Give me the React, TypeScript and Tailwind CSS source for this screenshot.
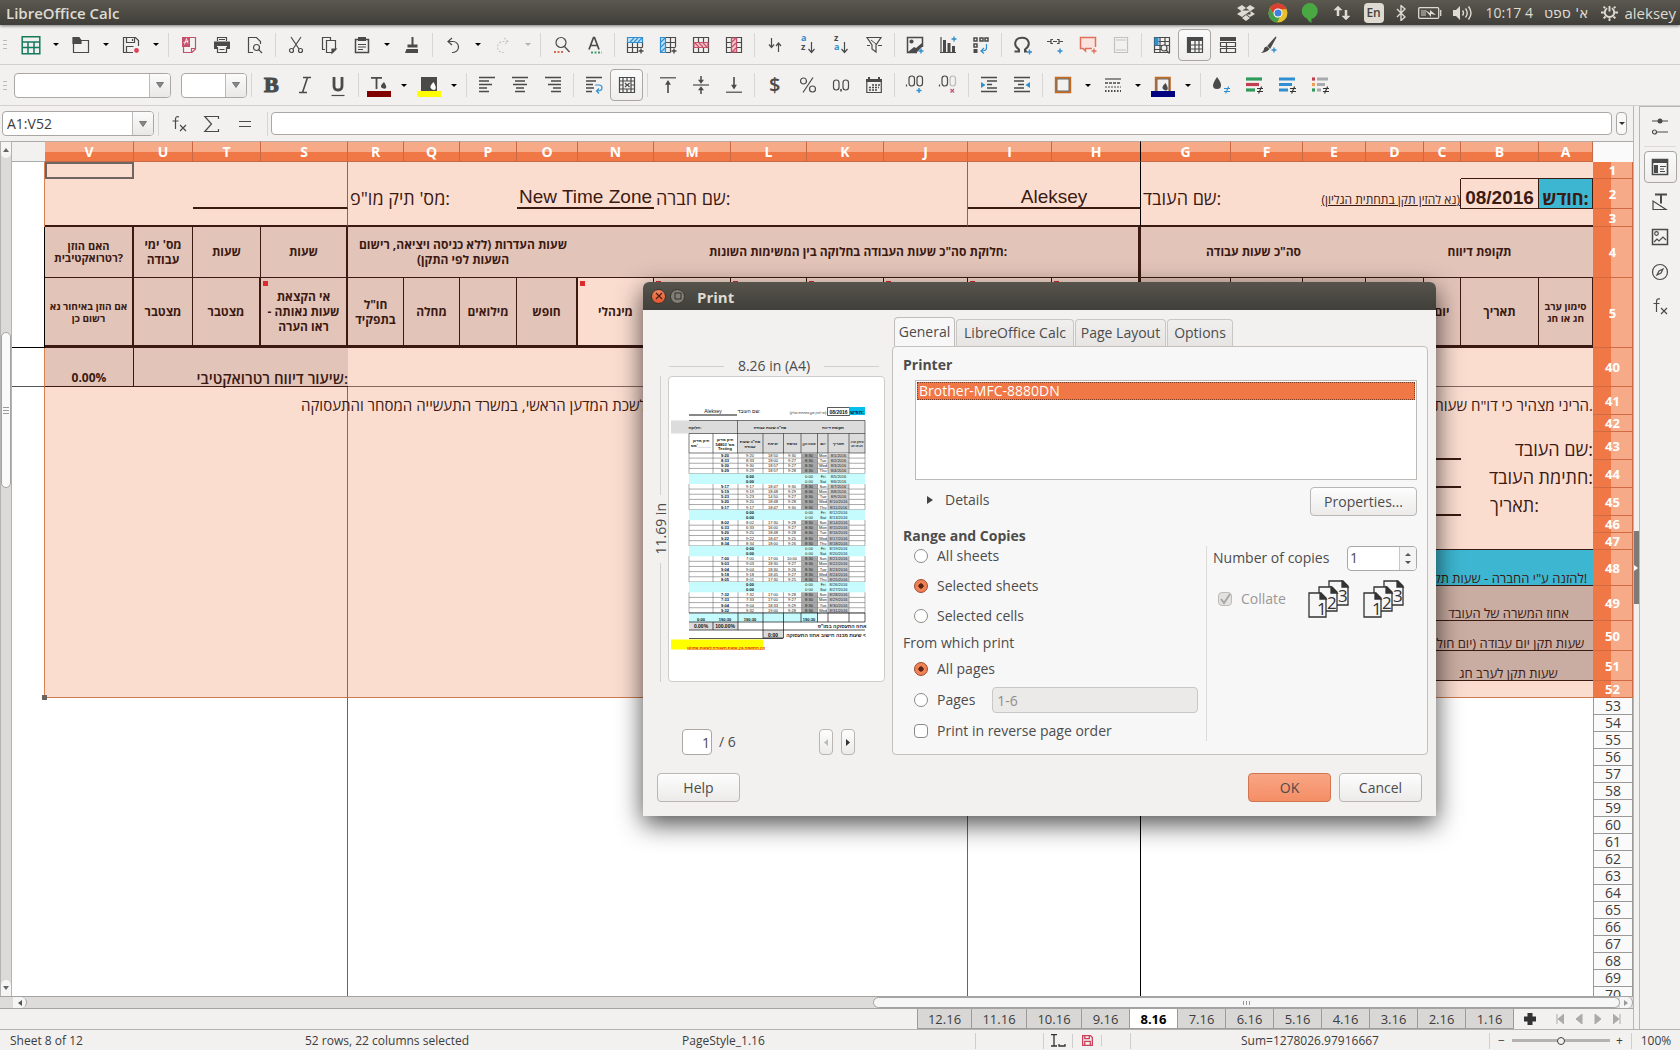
import type { ReactNode } from 'react'

const dark = '#4a4a4a'
const blue = '#2f8fd0'
const red = '#c4506a'

/* ---------- toolbar pieces ---------- */

const Glyph = ({ children }: { children: ReactNode }) => (
  <svg viewBox="0 0 16 16" className="size-4 shrink-0 overflow-visible" fill="none" stroke={dark} strokeWidth="1.2">
    {children}
  </svg>
)

const Tool = ({ label, children, active = false }: { label: string; children: ReactNode; active?: boolean }) => (
  <button
    type="button"
    aria-label={label}
    className={`flex h-8 w-[33px] shrink-0 items-center justify-center ${
      active ? 'rounded border border-[#a9a6a3] bg-linear-to-b from-[#fafafa] to-[#efeeed]' : ''
    }`}
  >
    <Glyph>{children}</Glyph>
  </button>
)

const Arrow = ({ label, faded = false }: { label: string; faded?: boolean }) => (
  <button type="button" aria-label={label} className="flex h-8 w-[17px] shrink-0 items-center justify-center">
    <svg viewBox="0 0 6 3" className="h-[3px] w-1.5" fill={faded ? '#b5b3b1' : '#000'}>
      <path d="M0 0h6L3 3z" />
    </svg>
  </button>
)

const Sep = () => (
  <div className="flex w-2 shrink-0 justify-center">
    <div className="h-6 w-px bg-[#d8d6d4]" />
  </div>
)

const Grip = () => (
  <div className="flex w-[14px] shrink-0 flex-col gap-[3px] pl-[3px]">
    <i className="h-px w-1 bg-[#bbb]" />
    <i className="h-px w-1 bg-[#bbb]" />
    <i className="h-px w-1 bg-[#bbb]" />
  </div>
)

const Plus = ({ x = 13, y = 13, color = blue }: { x?: number; y?: number; color?: string }) => (
  <path d={`M${x - 2.5} ${y}h5M${x} ${y - 2.5}v5`} stroke={color} strokeWidth="1.4" />
)

const NotEqual = ({ color = '#333' }: { color?: string }) => (
  <path d="M11 11.5h6M11 14.5h6M15.6 9.5l-3 7" stroke={color} strokeWidth="1.1" />
)

const SheetGrid = () => <path d="M.5.5h15v15H.5zM.5 5.5h15M.5 10.5h15M5.5.5v15M10.5.5v15" />

const Lines = ({ d }: { d: string }) => <path d={d} strokeWidth="1.4" />

const SortLetters = ({ top, bottom, topColor, bottomColor }: { top: string; bottom: string; topColor: string; bottomColor: string }) => (
  <g fontSize="9" fontWeight="700" stroke="none" className="font-['Open_Sans',sans-serif]">
    <text x="1" y="4" fill={topColor}>{top}</text>
    <text x="1" y="13" fill={bottomColor}>{bottom}</text>
  </g>
)

const StandardToolbar = () => (
  <div className="flex h-10 items-center border-b border-[#d3d1cf]">
    <Grip />
    <Tool label="New"><path d="M-.8-.3h17.6v17H-.8zM-.8 5h17.6M-.8 10.5h17.6M5 5v11.5M11 5v11.5" stroke="#147a5c" strokeWidth="1.5" /></Tool>
    <Arrow label="New options" />
    <Tool label="Open"><path d="M.5 3v12.5h15V3.5H8z" /><path d="M0 .5h6l2 3v3H0z" fill={dark} /></Tool>
    <Arrow label="Open options" />
    <Tool label="Save">
      <path d="M10 15.5H.5V.5h12l3 3V9M3.5.5v5h8v-5M9.5 2v2M3.5 15.5v-6h7" />
      <circle cx="13.5" cy="13.5" r="2.4" fill="#dc4358" stroke="none" />
    </Tool>
    <Arrow label="Save options" />
    <Sep />
    <Tool label="Export as PDF">
      <path d="M9 .5h5.5V12L11 15.500H2.500V10M10.5 15.5v-4h4" stroke={red} />
      <path d="M1 0h8v10H1z" fill={red} stroke="none" />
      <path d="M3.500 7.500l2-6 1.500 5M2.500 5.500l5-1.500" stroke="#fff" strokeWidth=".8" />
    </Tool>
    <Tool label="Print"><path d="M3.5 4V.5h9V4M5 2.5h6" /><path d="M0 4.5h16V12h-3V9H3v3H0z" fill={dark} stroke="none" /><path d="M3.5 10v5.5h9V10M5.5 12.5h5" /></Tool>
    <Tool label="Print preview"><path d="M6 15.5H1.5V.5h8l4 4V7" /><circle cx="9.5" cy="10.5" r="3" /><path d="M11.7 12.7L15 16" /></Tool>
    <Sep />
    <Tool label="Cut"><path d="M3 0l8 12M13 0L5 12" /><circle cx="3.5" cy="13.5" r="2" /><circle cx="12.5" cy="13.5" r="2" /></Tool>
    <Tool label="Copy"><path d="M4 12.5H1.5V.5h8V3M5.5 3.5h9v9l-3 3h-6z" /><path d="M11 16v-4h4z" fill={dark} /></Tool>
    <Tool label="Paste"><path d="M1.5 2.5h13v13h-13z" strokeWidth="1.5" /><path d="M4 0h8v4H4z" fill={dark} stroke="none" /><path d="M4 7.5h8M4 10h8M4 12.5h5" /></Tool>
    <Arrow label="Paste options" />
    <Tool label="Clone formatting"><path d="M8.5 0v8" strokeWidth="2" /><path d="M3.5 7.5h10v3h-10zM2.5 12H14v4H1z" fill={dark} stroke="none" /></Tool>
    <Sep />
    <Tool label="Undo"><path d="M7 1L3 4.5 7 8M3 4.5h5a5.5 5.5 0 0 1 0 11H7" /></Tool>
    <Arrow label="Undo options" />
    <Tool label="Redo"><path d="M9 1l4 3.5L9 8M13 4.5H8a5.5 5.5 0 0 0 0 11h1" stroke="#c9c7c5" strokeDasharray="2 1.5" /></Tool>
    <Arrow label="Redo options" faded />
    <Sep />
    <Tool label="Find and replace"><circle cx="8" cy="5.5" r="5" /><path d="M11.5 9.5l5 5.5" /><path d="M1 15h9" stroke="#d86a4a" strokeDasharray="2 1.5" strokeWidth="1.8" /></Tool>
    <Tool label="Spelling"><path d="M3 12.5L7.5.5h1L13 12.5M4.5 8.5h7" strokeWidth="1.7" /><path d="M5 15.5h11" stroke="#3e9b6e" strokeDasharray="2 1.5" strokeWidth="1.8" /></Tool>
    <Sep />
    <Tool label="Insert row"><path d="M.5 5.5v10H11M.5 10.5h15M.5 5.5h15v5M5.5 5.5v10M10.5 5.5v10" /><path d="M.5.5h15v5H.5z" fill="#bfe0f7" stroke={blue} /><path d="M3 5l4-4M7 5l4-4M11 5l4-4" stroke={blue} /><Plus x={14} y={14} color={dark} /></Tool>
    <Tool label="Insert column"><path d="M5.5.5h10V10M5.5 15.5h5M5.5 5.5h10M5.5 10.5h10M10.5.5v15" /><path d="M.5.5h5v15h-5z" fill="#bfe0f7" stroke={blue} /><path d="M1 5l4-4M1 10l4-4M1 15l4-4" stroke={blue} /><Plus x={14} y={14} color={dark} /></Tool>
    <Tool label="Delete row"><SheetGrid /><path d="M1 5.5h14v5H1z" fill="#f6c6cd" stroke={red} /><path d="M2 6l4 4M6 6l4 4M10 6l4 4" stroke={red} /></Tool>
    <Tool label="Delete column"><SheetGrid /><path d="M5.5 1h5v14h-5z" fill="#f6c6cd" stroke={red} /><path d="M6 5l4-4M6 10l4-4M6 15l4-4" stroke={red} /></Tool>
    <Sep />
    <Tool label="Sort"><path d="M4.5 1v9M2 7.5l2.5 3 2.5-3M11.5 15V6M9 9l2.5-3L14 9" /></Tool>
    <Tool label="Sort ascending"><path d="M11.5 5v10M8.500 12l3 3.5 3-3.5" /><SortLetters top="a" bottom="z" topColor={blue} bottomColor={dark} /></Tool>
    <Tool label="Sort descending"><path d="M11.5 5v10M8.500 12l3 3.5 3-3.5" /><SortLetters top="z" bottom="a" topColor={dark} bottomColor={blue} /></Tool>
    <Tool label="AutoFilter"><path d="M1 .5h14L10 8v7l-4-3V8z" /><path d="M1 8.5h3M12 8.5h4M5 3l5 4" strokeWidth="1" /></Tool>
    <Sep />
    <Tool label="Insert image"><path d="M10 15.5H.5V.5h15V10" strokeWidth="1.5" /><circle cx="4.5" cy="4.5" r="1.5" fill={dark} /><path d="M1 15l6-5 2 1 6-5v4l-5 5z" fill={dark} stroke="none" /><Plus x={14} y={14} /></Tool>
    <Tool label="Insert chart"><path d="M0 15.5h16M1 0v15" /><path d="M3 3h3v12H3zM7.5 6h3v9h-3zM12 9h3v6h-3z" fill={dark} stroke="none" /><Plus x={14} y={2} /></Tool>
    <Tool label="Insert pivot table"><path d="M1 1h3v3H1zM7 1h3v3H7zM12 1h3v3h-3zM1 7h3v3H1z" strokeWidth="1.5" /><path d="M.5 12h4v4h-4z" fill={dark} stroke="none" /><path d="M13.5 7v4q0 3-5 3M11 11l-3 3 3 2.5" stroke={blue} /></Tool>
    <Sep />
    <Tool label="Special character"><path d="M.5 14.500H5v-2C-1.500 8 1 .8 8 .8S17.500 8 11 12.500v2h2" strokeWidth="2" /><Plus x={15.5} y={15} /></Tool>
    <Tool label="Insert hyperlink"><path d="M0 4.5h4M6 4.5h4M12 4.5h4M6 2.5H4v4h2M10 2.5h2v4h-2" /><Plus x={13} y={14} /></Tool>
    <Tool label="Insert comment"><path d="M12 11.5H5.5V14L3 11.5H.5V.5h15V10" stroke="#e0705a" strokeWidth="1.5" fill="#fae3de" /><Plus x={14} y={14} color="#e0705a" /></Tool>
    <Tool label="Headers and footers"><path d="M1.5.5h13v15h-13zM3 3h10M3 13h10" stroke="#c4c2c0" /></Tool>
    <Sep />
    <Tool label="Define print area"><path d="M.5.5h15v15H.5zM.5 4.5h15M.5 8.5h15M.5 12.5h7M6 .5v15M11 .5v8" /><path d="M.5.5h4v8h-4z" fill={blue} stroke="none" /><circle cx="10" cy="11" r="3" fill="#f2f1f0" /><path d="M12 13l3.5 3.5" /></Tool>
    <Tool label="Freeze panes" active><path d="M.5.5h15v15H.5z" /><path d="M0 0h16v4H4v12H0z" fill={dark} stroke="none" /><path d="M4 8h12M4 12h12M8 4v12M12 4v12" /></Tool>
    <Tool label="Split window"><path d="M0 0h16v4H0z" fill={dark} stroke="none" /><path d="M.5 5.5h15v4H.5zM.5 11.5h15v4H.5zM6.5 5.5v10" /></Tool>
    <Sep />
    <Tool label="Draw functions"><path d="M15 0L7 9l2 2z" fill={dark} /><path d="M6 9.5L8.5 12Q6 15.5 0 16q3-2 3-4t3-2.5z" fill={dark} stroke="none" /><Plus x={13} y={13} /></Tool>
  </div>
)

const Combo = ({ label, width, value = '' }: { label: string; width: string; value?: string }) => (
  <div className={`flex h-[25px] shrink-0 overflow-hidden rounded border border-[#aaa7a4] bg-white ${width}`}>
    <input aria-label={label} defaultValue={value} className="w-0 min-w-0 flex-1 px-1 text-sm text-[#3c3c3c] outline-none" />
    <button
      type="button"
      aria-label={`${label} list`}
      className="flex w-[21px] items-center justify-center border-l border-[#bdbab7] bg-linear-to-b from-[#fbfbfb] to-[#eae8e7]"
    >
      <svg viewBox="0 0 8 6" className="h-1.5 w-2" fill="#888" stroke="#666" strokeWidth=".8"><path d="M.5.5h7L4 5.5z" /></svg>
    </button>
  </div>
)

const FormattingToolbar = () => (
  <div className="flex h-[41px] items-center border-b border-[#d3d1cf]">
    <Grip />
    <Combo label="Font name" width="w-[157px]" />
    <div className="w-2.5 shrink-0" />
    <Combo label="Font size" width="w-[66px]" />
    <Sep />
    <Tool label="Bold"><text x="0" y="15" fontSize="22" fontWeight="700" fill={dark} className="font-['Liberation_Serif',serif]">B</text></Tool>
    <Tool label="Italic"><path d="M6 .5h8M2 15.5h8M10.5.5l-5 15" strokeWidth="1.6" /></Tool>
    <Tool label="Underline"><path d="M4 0v9q0 4 4 4t4-4V0" strokeWidth="2.8" /><path d="M1.5 18.5h13" /></Tool>
    <Sep />
    <Tool label="Font color"><path d="M0 .8h11M5.5.8V12" strokeWidth="1.8" /><path d="M13 5q3 4.500 2 6t-4 0 2-6z" fill={dark} stroke="none" /><path d="M-4 14h24v6H-4z" fill="#800000" stroke="none" /></Tool>
    <Arrow label="Font color options" />
    <Tool label="Highlighting color"><path d="M0 0h16v14H0z" fill={dark} stroke="none" /><path d="M12.5 5q3 5 2 7t-4 0 2-7z" fill="#fff" stroke="none" /><path d="M-4 14h24v6H-4z" fill="#ffff00" stroke="none" /></Tool>
    <Arrow label="Highlighting options" />
    <Sep />
    <Tool label="Align left"><Lines d="M0 .5h16M0 4h10M0 7.5h13M0 11h8M0 14.5h10" /></Tool>
    <Tool label="Align center"><Lines d="M0 .5h16M3 4h10M1 7.5h14M4 11h8M3 14.5h10" /></Tool>
    <Tool label="Align right"><Lines d="M0 .5h16M6 4h10M3 7.5h13M8 11h8M6 14.5h10" /></Tool>
    <Sep />
    <Tool label="Wrap text"><Lines d="M0 .5h16M0 4h10M0 7.5h7M0 11h8M0 14.5h6" /><path d="M9 8h4q3 0 3 3t-5 3M13 11.5L10.5 14l2.500 2.500" stroke={blue} /></Tool>
    <Tool label="Merge cells" active><path d="M.5.5h15v15H.5zM.5 4h15M.5 12h15M4 .5V16M8 .5V4M12 .5V16M8 12v4M0 8h4M12 8h4" /><path d="M6 6l2 2-2 2M10.5 6l-2 2 2 2" /></Tool>
    <Sep />
    <Tool label="Align top"><path d="M0 .8h16" /><path d="M8 16V5M6.500 7L8 4.500 9.500 7z" fill={dark} strokeWidth="1.6" /></Tool>
    <Tool label="Center vertically"><path d="M0 8h16" /><path d="M8-1v5M8 17v-5M6.500 3.500L8 5.500l1.500-2zM6.500 12.500L8 10.500l1.500 2z" fill={dark} strokeWidth="1.5" /></Tool>
    <Tool label="Align bottom"><path d="M0 15.200h16" /><path d="M8 0v10M6.500 8.500L8 11l1.500-2.500z" fill={dark} strokeWidth="1.6" /></Tool>
    <Sep />
    <Tool label="Currency"><text x="2" y="15" fontSize="20" fontWeight="600" fill={dark} stroke="none" className="font-['Open_Sans',sans-serif]">$</text></Tool>
    <Tool label="Percent"><circle cx="3.5" cy="4" r="3" /><circle cx="12.5" cy="12" r="3" /><path d="M13 .5L3 15.5" /></Tool>
    <Tool label="Number"><rect x=".5" y="3" width="5.5" height="10" rx="2.7" /><rect x="10" y="3" width="5.5" height="10" rx="2.7" /><path d="M8 12v2.5" strokeWidth="1.6" /></Tool>
    <Tool label="Date"><path d="M.8 2.5h14.500v13H.8z" /><path d="M0 2h16v3H0zM2 0h2v3H2zM12 0h2v3h-2z" fill={dark} stroke="none" /><path d="M6 8h8M3 10.5h10M3 13h8" strokeDasharray="2 1" strokeWidth="1.7" /></Tool>
    <Sep />
    <Tool label="Add decimal place"><rect x="2" y="-1" width="5.5" height="10" rx="2.7" /><rect x="10" y="-1" width="5.5" height="10" rx="2.7" /><path d="M-.5 7.5v2" /><Plus x={12} y={13.5} /></Tool>
    <Tool label="Delete decimal place"><rect x="2" y="-1" width="5.5" height="10" rx="2.7" /><rect x="10" y="-1" width="5.5" height="10" rx="2.7" stroke="#bbb" /><path d="M-.5 7.5v2" /><path d="M10.5 12l3.5 3.5M14 12l-3.5 3.5" stroke={red} /></Tool>
    <Sep />
    <Tool label="Increase indent"><Lines d="M0 .5h16M6 4h10M6 7.5h5M6 11h10M0 14.5h16" /><path d="M0 5l4.500 3L0 11z" fill={blue} stroke="none" /></Tool>
    <Tool label="Decrease indent"><Lines d="M0 .5h16M0 4h10M4 7.5h6M0 11h10M0 14.5h16" /><path d="M16 5l-4.500 3 4.500 3z" fill={blue} stroke="none" /></Tool>
    <Sep />
    <Tool label="Borders"><path d="M.8.8h14.400v14.400H.8z" stroke="#c26a20" strokeWidth="2" /><path d="M2 2h12v12H2z" stroke={dark} strokeWidth=".8" /></Tool>
    <Arrow label="Borders options" />
    <Tool label="Border style"><path d="M0 2h16" /><path d="M0 6h16" strokeDasharray="3 1" strokeWidth="1.5" /><path d="M0 10h16" strokeDasharray="2 1" /><path d="M0 14h16" strokeDasharray="1.5 1.5" strokeWidth="1.8" /></Tool>
    <Arrow label="Border style options" />
    <Tool label="Border color"><path d="M.8 14V.8h14V14" stroke="#c26a20" strokeWidth="2" /><path d="M2 14V2h12v12" strokeWidth=".8" /><path d="M10.5 6q3 4.500 2 6.500t-4 0 2-6.500z" fill={dark} stroke="none" /><path d="M-4 14h24v6H-4z" fill="#000080" stroke="none" /></Tool>
    <Arrow label="Border color options" />
    <Sep />
    <Tool label="Conditional formatting"><path d="M4 0q4.500 6 4 8.500a4 3.500 0 0 1-8 0Q0 6 4 0z" fill={dark} stroke="none" /><NotEqual color={blue} /></Tool>
    <Tool label="Color scale"><path d="M0 2h16" stroke="#2e9b5b" strokeWidth="3.2" /><path d="M0 7.5h13" stroke="#c0404f" strokeWidth="3.2" /><path d="M0 13h9" stroke="#2e9b5b" strokeWidth="3.2" /><NotEqual /></Tool>
    <Tool label="Data bar"><path d="M0 2h16M0 7.5h13M0 13h9" stroke={blue} strokeWidth="3.2" /><NotEqual /></Tool>
    <Tool label="Icon set"><path d="M5 2h11M5 7.5h8M5 13h4" stroke="#aaa" strokeWidth="3.2" /><path d="M0 2h3" stroke="#c0404f" strokeWidth="3.2" /><path d="M0 7.5h3" stroke="#f0a050" strokeWidth="3.2" /><path d="M0 13h3" stroke="#2e9b5b" strokeWidth="3.2" /><NotEqual /></Tool>
  </div>
)

const FormulaBar = () => (
  <div className="flex h-[35px] items-center pr-1.5 pl-0.5">
    <Combo label="Name box" width="w-[152px]" value="A1:V52" />
    <Sep />
    <Tool label="Function wizard"><path d="M8 1Q4.500-.5 4.500 3.500V13M1.500 5h6M9 9l6 6M15 9l-6 6" /></Tool>
    <Tool label="Sum"><path d="M14.5 3V.5H.8L7.500 8 .8 15.5h13.7V13" /></Tool>
    <Tool label="Function"><path d="M2 5.500h12M2 10.500h12" /></Tool>
    <div className="w-0.5" />
    <Sep />
    <input aria-label="Input line" className="h-[23px] min-w-0 flex-1 rounded border border-[#aaa7a4] bg-white px-2 outline-none" />
    <button type="button" aria-label="Expand formula bar" className="ml-1 flex h-[23px] w-[11px] items-center justify-center rounded border border-[#aaa7a4] bg-[#f8f8f8]">
      <svg viewBox="0 0 6 3" className="h-[3px] w-1.5" fill="#333"><path d="M0 0h6L3 3z" /></svg>
    </button>
  </div>
)

const TopPanel = () => (
  <header className="z-10 flex h-[25px] items-center justify-between bg-linear-to-b from-[#5b584f] to-[#3f3e39] pr-1 pl-1.5 text-[#dfdbd2] shadow-[0_1px_3px_rgba(0,0,0,0.5)]">
    <div className="text-[15px] leading-5 font-semibold">LibreOffice Calc</div>
    <div className="flex items-center text-sm">
      <svg viewBox="0 0 18 16" className="mr-[13px] h-4 w-[18px]" fill="#dfdbd2"><path d="M5 0l4 3-4.500 3L0 3zM13 0l5 3-4.500 3L9 3zM0 9l4.500-3L9 9l-4 3zM18 9l-4.500-3L9 9l4 3zM9 10l4 3-4 3-4-3zM4.500 5.500h9v4h-9z" /></svg>
      <svg viewBox="0 0 20 20" className="mr-[14px] size-5">
        <circle cx="10" cy="10" r="9.5" fill="#e8c02f" />
        <path d="M1.8 5.2a9.500 9.500 0 0 1 16.800 1H10a4.500 4.500 0 0 0-4.200 5.500z" fill="#d9402f" />
        <path d="M1.8 5.2l4.200 7A4.500 4.500 0 0 0 12 14l-3 5.500A9.500 9.500 0 0 1 1.800 5.200z" fill="#3f9f4c" />
        <circle cx="10" cy="10" r="4.5" fill="#fff" />
        <circle cx="10" cy="10" r="3.5" fill="#3f7fe0" />
      </svg>
      <svg viewBox="0 0 16 20" className="mr-[15px] h-5 w-4" fill="#4aa843"><path d="M8 0a8 8 0 0 1 1.500 15.800V20Q6 18.500 5 15.500A8 8 0 0 1 8 0z" /></svg>
      <svg viewBox="0 0 18 16" className="mr-[13px] h-4 w-[18px]" stroke="#dfdbd2" fill="#dfdbd2" strokeWidth="2.5"><path d="M5 3v8M13 5v8" /><path d="M1 5l4-4 4 4zM9 11l4 4 4-4z" strokeWidth=".5" /></svg>
      <div className="mr-3 flex h-5 w-5 items-center justify-center rounded-sm bg-[#dfdbd2] text-xs font-semibold text-[#45433d]">En</div>
      <svg viewBox="0 0 10 16" className="mr-3 h-4 w-2.5" fill="none" stroke="#dfdbd2" strokeWidth="1.4"><path d="M1 4l8 8-4 3.500V.5L9 4l-8 8" /></svg>
      <svg viewBox="0 0 24 12" className="mr-[11px] h-3 w-6" fill="none" stroke="#dfdbd2" strokeWidth="1.3"><rect x=".7" y=".7" width="20" height="10.6" rx="1" /><path d="M22.700 3v6" /><path d="M3 3h5v6H3z" fill="#8f8c84" stroke="none" /><path d="M7 3l5 3V3l6 5-5-1v3z" fill="#dfdbd2" stroke="none" /></svg>
      <svg viewBox="0 0 20 16" className="mr-[13px] h-4 w-5" fill="none" stroke="#dfdbd2" strokeWidth="1.4"><path d="M0 5h3l4-4v14l-4-4H0z" fill="#dfdbd2" stroke="none" /><path d="M9.500 5.500q2 2.500 0 5M12.500 3.500q3.500 4.500 0 9M15.500 1.500q5 6.500 0 13" /></svg>
      <span className="mr-[11px]">10:17 4</span>
      <span className="mr-[13px] font-['DejaVu_Sans','Liberation_Sans',sans-serif]">א' ספט</span>
      <svg viewBox="0 0 18 18" className="mr-1.5 size-[17px]" fill="none" stroke="#dfdbd2" strokeWidth="2"><path d="M6.500 4.500a5 5 0 1 0 5 0M9 2v6" /><path d="M15 9h3M0 9h3M9 15v3M13.200 13.200l2 2M4.800 13.200l-2 2M13.600 4.400l1.700-1.700M4.400 4.400L2.700 2.700" /></svg>
      <span className="text-[15px] leading-5">aleksey</span>
    </div>
  </header>
)

/* ---------- spreadsheet ---------- */

const columns = [
  { name: 'V', w: 89 }, { name: 'U', w: 59 }, { name: 'T', w: 68 }, { name: 'S', w: 87 },
  { name: 'R', w: 56 }, { name: 'Q', w: 56 }, { name: 'P', w: 57 }, { name: 'O', w: 61 },
  { name: 'N', w: 76 }, { name: 'M', w: 77 }, { name: 'L', w: 76 }, { name: 'K', w: 77 },
  { name: 'J', w: 84 }, { name: 'I', w: 84 }, { name: 'H', w: 89 }, { name: 'G', w: 90 },
  { name: 'F', w: 72 }, { name: 'E', w: 63 }, { name: 'D', w: 58 }, { name: 'C', w: 37 },
  { name: 'B', w: 78 }, { name: 'A', w: 54 },
]

const emptyRows = [53, 54, 55, 56, 57, 58, 59, 60, 61, 62, 63, 64, 65, 66, 67, 68, 69, 70]

const pink = 'bg-[#fbddd0]'
const rose = 'bg-[#e3c4b9]'
const ink = 'border-[#3b1a12]'
const thin = 'border-[#85675d]'

const label18 = 'pt-2 text-[18px] leading-5 whitespace-nowrap'
const value19 = "pt-2 text-center font-['Liberation_Sans',sans-serif] text-[19px] leading-5 whitespace-nowrap"

type CellProps = { span?: number; className?: string; children?: ReactNode }

const Cell = ({ span = 1, className = '', children }: CellProps) => (
  <td colSpan={span} className={`px-0 pb-0 ${className}`}>
    {children}
  </td>
)

/* cell with the red comment marker in its corner */
const NotedCell = ({ className, children }: { className: string; children?: ReactNode }) => (
  <td className={`p-0 ${className}`}>
    <div className="relative flex h-[66px] items-center justify-center leading-[15px]">
      <i className="absolute top-0.5 left-0.5 size-[5px] bg-[#dd2a2f]" />
      {children}
    </div>
  </td>
)

const RowHead = ({ n }: { n: number }) => (
  <th
    scope="row"
    className="border-r border-b border-[#cf6a43] bg-linear-to-r from-[#f07746] from-[45%] to-[#f7aa88] to-[45%] p-0 text-center text-[13px] leading-4 font-bold text-white"
  >
    {n}
  </th>
)

const Row = ({ n, h, children, gutter = '' }: { n: number; h: string; children: ReactNode; gutter?: string }) => (
  <tr className={h}>
    <td className={`border-r border-r-[#d9824f] bg-white p-0 ${gutter}`} />
    {children}
    <RowHead n={n} />
  </tr>
)

/* columns V to H, split where the page-break lines run */
const BlankLeft = () => (
  <>
    <Cell span={4} className={`${pink} border-r ${thin}`} />
    <Cell span={9} className={`${pink} border-r ${thin}`} />
    <Cell span={2} className={`${pink} border-r border-black`} />
  </>
)

const SignRow = ({ n, label, inner = false }: { n: number; label: string; inner?: boolean }) => (
  <Row n={n} h="h-[28px]">
    <BlankLeft />
    <Cell span={3} className={pink} />
    <Cell span={2} className={`${pink} border-b-2 ${ink}`} />
    <Cell span={inner ? 1 : 2} className={`${pink} pt-1.5 text-right text-[18px] leading-5 whitespace-nowrap`}>{label}</Cell>
    {inner && <Cell className={pink} />}
  </Row>
)

const NoteRow = ({ n, h, fill, text }: { n: number; h: string; fill: string; text: string }) => (
  <Row n={n} h={h}>
    <BlankLeft />
    <Cell span={4} className={pink} />
    <Cell span={3} className={`${fill} border-b ${ink} text-center align-bottom text-[13px] leading-[14px] whitespace-nowrap`}>{text}</Cell>
  </Row>
)

const Sheet = () => (
  <div className="min-w-0 flex-1 overflow-hidden bg-white font-['Open_Sans','Liberation_Sans',sans-serif] text-[#3b1a12]">
    <table className="w-full table-fixed border-separate border-spacing-0">
      <colgroup>
        <col />
        {columns.map((c) => (
          <col key={c.name} style={{ width: c.w }} />
        ))}
        <col className="w-10" />
      </colgroup>
      <thead>
        <tr className="h-[21px]">
          <td className="border-t border-b border-[#aaa] bg-[#f2f1f0] p-0" />
          {columns.map((c) => (
            <th
              key={c.name}
              scope="col"
              className={`border-t border-r border-b border-t-[#b9aaa3] border-b-[#c56a45] bg-linear-to-b from-[#f7aa88] from-50% to-[#f07746] to-50% p-0 text-sm leading-4 font-bold text-white ${
                c.name === 'H' ? 'border-r-black' : 'border-r-[#c56a45]'
              }`}
            >
              {c.name}
            </th>
          ))}
          <td className="border-t border-[#aaa] bg-[#fafafa] p-0" />
        </tr>
      </thead>
      <tbody>
        <Row n={1} h="h-[17px]">
          <Cell className="border-2 border-[#6e6462] bg-[#fbddd0]" />
          <Cell span={3} className={`${pink} border-r ${thin}`} />
          <Cell span={9} className={`${pink} border-r ${thin}`} />
          <Cell span={2} className={`${pink} border-r border-black`} />
          <Cell span={5} className={pink} />
          <Cell span={2} className={`${pink} border-b ${ink}`} />
        </Row>
        <Row n={2} h="h-[30px]">
          <Cell span={2} className={pink} />
          <Cell span={2} className={`${pink} border-r border-b-2 border-r-[#85675d] border-b-[#3b1a12]`} />
          <Cell span={3} className={`${pink} ${label18} pl-0.5`}>מס' תיק מו"פ:</Cell>
          <Cell span={2} className={`${pink} border-b-2 ${ink} ${value19}`}>New Time Zone</Cell>
          <Cell span={4} className={`${pink} border-r ${thin} ${label18} pl-0.5`}>שם חברה:</Cell>
          <Cell span={2} className={`${pink} border-r border-b-2 border-r-black border-b-[#3b1a12] ${value19}`}>Aleksey</Cell>
          <Cell className={`${pink} ${label18} pl-0.5`}>שם העובד:</Cell>
          <Cell span={4} className={`${pink} border-r ${ink} pt-3 text-right text-xs leading-4 whitespace-nowrap underline`}>
            (נא להזין תקן בתחתית הגליון)
          </Cell>
          <Cell className={`${pink} border-r border-b ${ink} ${value19} font-bold`}>08/2016</Cell>
          <Cell className={`border-r border-b bg-[#3db7d1] ${ink} ${label18} text-center font-bold`}>חודש:</Cell>
        </Row>
        <Row n={3} h="h-[18px]">
          <Cell span={4} className={`border-r border-b-2 border-r-[#85675d] border-b-[#3b1a12] ${pink}`} />
          <Cell span={9} className={`border-r border-b-2 border-r-[#85675d] border-b-[#3b1a12] ${pink}`} />
          <Cell span={2} className={`border-r border-b-2 border-r-black border-b-[#3b1a12] ${pink}`} />
          <Cell span={7} className={`border-b-2 ${ink} ${pink}`} />
        </Row>
        <tr className="h-[51px] text-center text-xs font-bold">
          <td className="border-r border-black bg-white p-0" />
          <Cell className={`${rose} border-r-2 border-b ${ink} text-[11px] leading-3`}>האם הוזן<br />רטרואקטיבית?</Cell>
          <Cell className={`${rose} border-r border-b ${ink} leading-[15px]`}>מס' ימי<br />עבודה</Cell>
          <Cell className={`${rose} border-r border-b ${ink}`}>שעות</Cell>
          <Cell className={`${rose} border-r-2 border-b ${ink}`}>שעות</Cell>
          <Cell span={4} className={`${rose} border-b ${ink} leading-[15px]`}>שעות העדרות (ללא כניסה ויציאה, רישום השעות לפי התקן)</Cell>
          <Cell span={7} className={`${rose} border-r-3 border-b ${ink}`}>חלוקת סה"כ שעות העבודה בחלוקה בין המשימות השונות:</Cell>
          <Cell span={3} className={`${rose} border-b ${ink}`}>סה"כ שעות עבודה</Cell>
          <Cell span={4} className={`${rose} border-b ${ink}`}>תקופת דיווח</Cell>
          <RowHead n={4} />
        </tr>
        <tr className="h-[70px] text-center text-xs font-bold">
          <td className="border-r border-b border-black bg-white p-0" />
          <Cell className={`${rose} border-r-2 border-b-3 ${ink} text-[10px] leading-3`}>אם הוזן באיחור נא רשום כן</Cell>
          <Cell className={`${rose} border-r border-b-3 ${ink}`}>מצטבר</Cell>
          <Cell className={`${rose} border-r-2 border-b-3 ${ink}`}>מצטבר</Cell>
          <NotedCell className={`${rose} border-r-2 border-b-3 ${ink}`}>
            <span>אי הקצאת<br />שעות נאותה -&rlm;<br />ראו הערה</span>
          </NotedCell>
          <Cell className={`${rose} border-r border-b-3 ${ink} leading-[15px]`}>חו"ל<br />בתפקיד</Cell>
          <Cell className={`${rose} border-r border-b-3 ${ink}`}>מחלה</Cell>
          <Cell className={`${rose} border-r border-b-3 ${ink}`}>מילואים</Cell>
          <Cell className={`${rose} border-r-2 border-b-3 ${ink}`}>חופש</Cell>
          <NotedCell className={`${pink} border-r border-b-3 ${ink}`}>מינהלי</NotedCell>
          <NotedCell className={`${pink} border-r border-b-3 ${ink}`} />
          <NotedCell className={`${pink} border-r border-b-3 ${ink}`} />
          <NotedCell className={`${pink} border-r border-b-3 ${ink}`} />
          <NotedCell className={`${pink} border-r border-b-3 ${ink}`} />
          <NotedCell className={`${pink} border-r border-b-3 ${ink}`} />
          <NotedCell className={`${pink} border-r-3 border-b-3 ${ink}`} />
          <Cell className={`${rose} border-r border-b-3 ${ink}`} />
          <Cell className={`${rose} border-r border-b-3 ${ink}`} />
          <Cell className={`${rose} border-r border-b-3 ${ink}`} />
          <Cell className={`${rose} border-r border-b-3 ${ink}`} />
          <Cell className={`${rose} border-r border-b-3 ${ink}`}>יום</Cell>
          <Cell className={`${rose} border-r border-b-3 ${ink}`}>תאריך</Cell>
          <Cell className={`${rose} border-r border-b-3 ${ink} text-[10px] leading-3`}>סימון ערב<br />חג או חג</Cell>
          <RowHead n={5} />
        </tr>
        <Row n={40} h="h-[39px]" gutter="border-b border-b-[#555]">
          <Cell className={`${rose} border-r border-b ${ink} text-center align-bottom text-xs leading-4 font-bold`}>0.00%</Cell>
          <Cell span={3} className={`${rose} border-b ${ink} text-right align-bottom text-[15px] leading-4 font-semibold whitespace-nowrap`}>שיעור דיווח רטרואקטיבי:</Cell>
          <Cell span={9} className={`${pink} border-b ${thin}`} />
          <Cell span={2} className={`${pink} border-r border-b ${thin}`} />
          <Cell span={7} className={`${pink} border-b ${thin}`} />
        </Row>
        <Row n={41} h="h-[28px]">
          <Cell span={3} className={pink} />
          <Cell className={`${pink} border-r ${thin} pt-2 pl-10 text-[15px] leading-5 whitespace-nowrap`}>לשכת המדען הראשי, במשרד התעשייה המסחר והתעסוקה</Cell>
          <Cell span={9} className={pink} />
          <Cell span={2} className={pink} />
          <Cell span={7} className={`${pink} pt-2 text-right text-[15px] leading-5 whitespace-nowrap`}>הריני מצהיר כי דו"ח שעות זה.</Cell>
        </Row>
        <Row n={42} h="h-[17px]"><BlankLeft /><Cell span={7} className={pink} /></Row>
        <SignRow n={43} label="שם העובד:" />
        <SignRow n={44} label="חתימת העובד:" />
        <SignRow n={45} label="תאריך:" inner />
        <Row n={46} h="h-[17px]"><BlankLeft /><Cell span={7} className={pink} /></Row>
        <Row n={47} h="h-[17px]"><BlankLeft /><Cell span={4} className={pink} /><Cell span={3} className={`${pink} border-b ${ink}`} /></Row>
        <NoteRow n={48} h="h-[36px]" fill="bg-[#3db7d1]" text='להזנה ע"י החברה - שעות תקן!' />
        <NoteRow n={49} h="h-[35px]" fill="bg-[#caada2]" text="אחוז המשרה של העובד" />
        <NoteRow n={50} h="h-[30px]" fill="bg-[#caada2]" text="שעות תקן יום עבודה (יום חול)" />
        <NoteRow n={51} h="h-[30px]" fill="bg-[#caada2]" text="שעות תקן לערב חג" />
        <tr className="h-[17px]">
          <td className="border-r border-[#d9824f] p-0" />
          <td colSpan={4} className={`${pink} relative border-r border-b border-r-[#85675d] border-b-[#cf7a50] p-0`}>
            <i className="absolute -bottom-[3px] -left-[3px] size-[5px] bg-[#6b6360]" />
          </td>
          <Cell span={9} className={`${pink} border-r border-b border-r-[#85675d] border-b-[#cf7a50]`} />
          <Cell span={2} className={`${pink} border-r border-b border-r-black border-b-[#cf7a50]`} />
          <Cell span={7} className={`${pink} border-b border-[#cf7a50]`} />
          <RowHead n={52} />
        </tr>
        {emptyRows.map((n) => (
          <tr key={n} className="h-[17px]">
            <td className="p-0" />
            <Cell span={4} className="border-r border-[#666]" />
            <Cell span={9} className="border-r border-[#666]" />
            <Cell span={2} className="border-r border-black" />
            <Cell span={7} />
            <th scope="row" className="border-r border-b border-l border-[#999] bg-[#fafafa] p-0 text-center text-sm leading-4 font-normal text-[#3c3c3c]">{n}</th>
          </tr>
        ))}
      </tbody>
    </table>
  </div>
)

const VerticalScroll = () => (
  <div className="flex w-3 shrink-0 flex-col border-x border-t border-[#b5b3b1] bg-[#dcdad8]">
    <div className="flex h-4 items-center justify-center rounded-b-lg bg-[#f5f5f5] text-[#666]">
      <svg viewBox="0 0 6 4" className="h-1 w-1.5" fill="currentColor"><path d="M0 4h6L3 0z" /></svg>
    </div>
    <div className="h-[174px]" />
    <div className="flex h-[156px] flex-col items-center justify-center gap-0.5 rounded-full border border-[#a5a3a1] bg-[#fafafa]">
      <i className="h-px w-1.5 bg-[#999]" />
      <i className="h-px w-1.5 bg-[#999]" />
      <i className="h-px w-1.5 bg-[#999]" />
    </div>
    <div className="flex-1" />
    <div className="flex h-4 items-center justify-center rounded-t-lg bg-[#f5f5f5] text-[#666]">
      <svg viewBox="0 0 6 4" className="h-1 w-1.5" fill="currentColor"><path d="M0 0h6L3 4z" /></svg>
    </div>
  </div>
)

const HorizontalScroll = () => (
  <div className="flex h-[13px] items-stretch border-y border-[#a5a3a1] bg-[#dedcda] pl-[13px]">
    <div className="flex w-[14px] items-center justify-center rounded-r-full border-r border-[#a5a3a1] bg-[#f5f5f5]">
      <svg viewBox="0 0 4 6" className="h-1.5 w-1" fill="#555"><path d="M4 0v6L0 3z" /></svg>
    </div>
    <div className="flex-[849_0_0%]" />
    <div className="flex flex-[747_0_0%] items-center justify-center gap-0.5 rounded-full border border-[#a5a3a1] bg-[#f7f6f6]">
      <i className="h-1 w-px bg-[#999]" />
      <i className="h-1 w-px bg-[#999]" />
      <i className="h-1 w-px bg-[#999]" />
    </div>
    <div className="flex w-[13px] items-center justify-center rounded-r-full border-r border-[#a5a3a1] bg-[#f5f5f5]">
      <svg viewBox="0 0 4 6" className="h-1.5 w-1" fill="#999"><path d="M0 0v6l4-3z" /></svg>
    </div>
  </div>
)

const sheets = ['12.16', '11.16', '10.16', '9.16', '8.16', '7.16', '6.16', '5.16', '4.16', '3.16', '2.16', '1.16']

const sheetNav = [
  { label: 'First sheet', d: 'M1 0v10M8 0v10L2 5z' },
  { label: 'Previous sheet', d: 'M7 0v10L1 5z' },
  { label: 'Next sheet', d: 'M1 0v10l6-5z' },
  { label: 'Last sheet', d: 'M7 0v10M0 0v10l6-5z' },
]

const SheetTabs = () => (
  <div className="flex h-5 items-center justify-end pr-3">
    {sheets.map((name) => (
      <button
        key={name}
        type="button"
        className={`h-5 border-b border-[#9d9b99] text-[13px] leading-4 first:border-l ${name.length > 4 ? 'w-[55px]' : 'w-12'} ${
          name === '8.16' ? 'border-r bg-white font-bold text-black' : 'border-r bg-[#d9d7d5] text-[#3c3c3c]'
        }`}
      >
        {name}
      </button>
    ))}
    <button type="button" aria-label="Add sheet" className="ml-[9px] flex w-[13px] justify-center">
      <svg viewBox="0 0 12 12" className="size-3" stroke="#333" strokeWidth="5"><path d="M6 0v12M0 6h12" /></svg>
    </button>
    <div className="ml-5 flex gap-[11px]">
      {sheetNav.map((item) => (
        <button key={item.label} type="button" aria-label={item.label}>
          <svg viewBox="0 0 8 10" className="h-2.5 w-2" fill="#aaa" stroke="#aaa"><path d={item.d} /></svg>
        </button>
      ))}
    </div>
  </div>
)

const StatusBar = () => (
  <footer className="flex h-[21px] items-center border-t border-[#b5b3b1] bg-[#f2f1f0] pt-px text-xs text-[#3c3c3c]">
    <div className="w-[295px] pl-2.5">Sheet 8 of 12</div>
    <div className="w-[377px] pl-2.5">52 rows, 22 columns selected</div>
    <div className="w-[304px] border-r border-[#d0cecc] pl-2.5">PageStyle_1.16</div>
    <div className="h-4 w-[68px] border-r border-[#d0cecc]" />
    <div className="flex w-[29px] justify-center border-r border-[#d0cecc]">
      <svg viewBox="0 0 16 14" className="h-3.5 w-4" fill="none" stroke="#333" strokeWidth="1.3"><path d="M1 .7h6M1 12h6M4 .7V12M9 10v2h6v-2" /></svg>
    </div>
    <div className="flex w-[29px] justify-center border-r border-[#d0cecc]">
      <svg viewBox="0 0 12 12" className="size-[11px]" fill="none" stroke="#c9405a" strokeWidth="1.4"><path d="M.7.7h8.600l2 2v8.600H.7zM3 .7V4h5V.7M3 11V7h6v4" /></svg>
    </div>
    <div className="h-4 w-[29px] border-r border-[#d0cecc]" />
    <div className="flex-1 border-r border-[#d0cecc] text-center">Sum=1278026.97916667</div>
    <div className="flex w-[142px] items-center justify-center gap-1 border-r border-[#d0cecc]">
      <button type="button" aria-label="Zoom out" className="w-3">−</button>
      <input
        type="range"
        aria-label="Zoom"
        className="h-[3px] w-[98px] appearance-none bg-[#b5b3b1] [&::-webkit-slider-thumb]:size-2 [&::-webkit-slider-thumb]:appearance-none [&::-webkit-slider-thumb]:rounded-full [&::-webkit-slider-thumb]:border [&::-webkit-slider-thumb]:border-[#444] [&::-webkit-slider-thumb]:bg-[#f2f1f0]"
      />
      <button type="button" aria-label="Zoom in" className="w-3">+</button>
    </div>
    <div className="w-12 text-center">100%</div>
  </footer>
)

const Sidebar = () => (
  <aside className="flex shrink-0">
    <div className="flex w-[7px] flex-col justify-center border-x border-[#b9b7b5] bg-[#f2f1f0]">
      <div className="flex h-[73px] items-center bg-[#7d7b78]">
        <svg viewBox="0 0 4 6" className="h-1.5 w-1" fill="#fff"><path d="M0 0v6l4-3z" /></svg>
      </div>
    </div>
    <div className="flex w-10 flex-col items-center border-t border-[#b9b7b5] pt-[3px]">
      <Tool label="Sidebar settings"><path d="M0 3h16M5 14h11" /><circle cx="8" cy="3" r="2.5" fill={dark} stroke="none" /><circle cx="2.5" cy="14" r="2" /></Tool>
      <div className="my-1 h-px w-8 bg-[#dcdad8]" />
      <div className="flex flex-col items-center gap-[3px]">
        <Tool label="Properties" active><path d="M.5.5h15v15H.5z" strokeWidth="1.6" /><path d="M0 0h16v4H0zM2 6h4v8H2z" fill={dark} stroke="none" /><path d="M8 7.500h6M8 10h4M8 12.500h5" /></Tool>
        <Tool label="Styles"><path d="M3 .5h12M9 .5v9" strokeWidth="2" /><path d="M1 7v8.500h13z" /></Tool>
        <Tool label="Gallery"><path d="M.5.5h15v15H.5z" strokeWidth="1.5" /><circle cx="4.5" cy="4.5" r="1.8" /><path d="M2 13l3-3 2 2 4-4 3 3" /></Tool>
        <Tool label="Navigator"><circle cx="8" cy="8" r="7.5" /><path d="M11 5l-2 4-4 2 2-4z" /></Tool>
        <Tool label="Functions"><path d="M8 0Q4.500-1 4.500 3v10M1.500 4.500h6M9 9l6 6M15 9l-6 6" /></Tool>
      </div>
    </div>
  </aside>
)

/* ---------- print dialog ---------- */

const days = [
  ['9:20', '18:50', '9:30', 'Mon'], ['8:33', '18:00', '9:27', 'Tue'], ['9:30', '18:57', '9:27', 'Wed'], ['9:29', '18:57', '9:28', 'Thu'],
  ['0:00', '', '', 'Fri'], ['0:00', '', '', 'Sat'],
  ['9:17', '18:47', '9:30', 'Sun'], ['9:19', '18:48', '9:29', 'Mon'], ['5:23', '14:50', '9:27', 'Tue'], ['9:20', '18:48', '9:28', 'Wed'], ['9:17', '18:47', '9:30', 'Thu'],
  ['0:00', '', '', 'Fri'], ['0:00', '', '', 'Sat'],
  ['8:02', '17:30', '9:28', 'Sun'], ['6:33', '16:00', '9:27', 'Mon'], ['9:20', '18:48', '9:28', 'Tue'], ['9:22', '18:47', '9:25', 'Wed'], ['8:34', '18:00', '9:26', 'Thu'],
  ['0:00', '', '', 'Fri'], ['0:00', '', '', 'Sat'],
  ['7:00', '17:00', '10:00', 'Sun'], ['9:03', '18:30', '9:27', 'Mon'], ['9:04', '18:30', '9:26', 'Tue'], ['9:18', '18:45', '9:27', 'Wed'], ['8:05', '17:30', '9:25', 'Thu'],
  ['0:00', '', '', 'Fri'], ['0:00', '', '', 'Sat'],
  ['7:32', '17:00', '9:28', 'Sun'], ['7:33', '17:00', '9:27', 'Mon'], ['9:04', '18:33', '9:29', 'Tue'], ['9:32', '19:00', '9:28', 'Wed'],
]

const PagePreview = () => (
  <svg viewBox="1 1 215 303" className="w-full font-['Liberation_Sans',sans-serif]" fontSize="4" textAnchor="middle" fill="#111">
    <text x="45" y="37" fontSize="5">Aleksey</text>
    <path d="M21 39h48" stroke="#111" />
    <text x="81" y="37" fontSize="5">שם העובד:</text>
    <text x="140" y="38" fontSize="3">(נא להזין תקן בתחתית הגליון)</text>
    <path d="M159.500 31.500h22v8h-22z" fill="#fff" stroke="#111" strokeWidth=".7" />
    <text x="170.500" y="37.500" fontSize="5" fontWeight="700">08/2016</text>
    <path d="M181 31h16v8h-16z" fill="#00bfee" />
    <text x="189" y="37.500" fontSize="5" fontWeight="700">חודש:</text>
    <path d="M3 44.500h194v13H3z" fill="#dcdcdc" />
    <path d="M70 57.500h127v19.500H70z" fill="#dcdcdc" />
    <path d="M21 44.500h176M21 57.500h176M21 77h176M69.500 44.500V77M197 44.500V77M21 57.500V77M45 57.500V77M95 57.500V77M115.500 57.500V77M133 57.500V77M149.500 57.500V77M160 57.500V77M181 57.500V77" stroke="#222" strokeWidth=".6" />
    <g fontWeight="700">
      <text x="27" y="53">חלוקה:</text>
      <text x="102" y="53">סה"כ שעות עבודה</text>
      <text x="165" y="53">תקופת דיווח</text>
      <text x="33" y="66">תיק מדען</text>
      <text x="33" y="71">מס'______</text>
      <text x="57" y="65">תיק מדען</text>
      <text x="57" y="69.500">מס' 54803</text>
      <text x="57" y="74">Testing</text>
      <text x="82" y="67">סה"כ שעות</text>
      <text x="82" y="72">עבודה</text>
      <text x="105" y="69">יציאה</text>
      <text x="124" y="69">כניסה</text>
      <text x="141" y="69" fontSize="3">שעות תקן</text>
      <text x="155" y="69">יום</text>
      <text x="170.500" y="69">תאריך</text>
      <text x="189" y="67" fontSize="3">סימון ערב</text>
      <text x="189" y="71" fontSize="3">חג או חג</text>
    </g>
    {days.map(([hours, out, start, day], i) => {
      const y = 77 + i * 5.16
      const weekend = day === 'Fri' || day === 'Sat'
      return (
        <g key={i}>
          {weekend ? (
            <rect x="21" y={y} width="176" height="5.2" fill="#c6fbfd" />
          ) : (
            <>
              <rect x="133" y={y} width="16.5" height="5.2" fill="#a8a8a8" />
              <rect x="160" y={y} width="21" height="5.2" fill="#cfcfcf" />
              <path d={`M21 ${y + 5.1}h176M21 ${y}v5.1M45 ${y}v5.1M70 ${y}v5.1M95 ${y}v5.1M115.5 ${y}v5.1M149.5 ${y}v5.1M160 ${y}v5.1M181 ${y}v5.1M197 ${y}v5.1`} stroke="#555" strokeWidth=".5" />
              <text x="57" y={y + 4} fontWeight="700">{hours}</text>
            </>
          )}
          <text x="82" y={y + 4} fontWeight={weekend ? 700 : 400}>{hours}</text>
          <text x="105" y={y + 4}>{out}</text>
          <text x="124" y={y + 4}>{start}</text>
          <text x="141" y={y + 4}>{weekend ? '0:00' : '8:30'}</text>
          <text x="155" y={y + 4}>{day}</text>
          <text x="170.5" y={y + 4}>{`8/${i + 1}/2016`}</text>
        </g>
      )
    })}
    <path d="M21 237h128v9H21z" fill="#c6fbfd" />
    <path d="M21 246h49v8H21zM95 254h20v8H95z" fill="#dcdcdc" />
    <path d="M21 237h176M21 246h176v-9M70 237v17M21 254h176M95 237v25h20.500v-25M133 237v9M149.500 237v9M160 237v9M181 237v9M45 246v8M21 262.500h94" stroke="#111" strokeWidth=".7" fill="none" />
    <g fontWeight="700">
      <text x="33" y="244.500">0:00</text>
      <text x="57" y="244.500">190:30</text>
      <text x="82" y="244.500">190:30</text>
      <text x="141" y="244.500">190:30</text>
      <text x="33" y="252" fontSize="5">0.00%</text>
      <text x="57" y="252" fontSize="5">100.00%</text>
      <text x="174" y="252" fontSize="5">אחוז התעסוקה במו"פ</text>
      <text x="105" y="260.500" fontSize="5">0:00</text>
      <text x="158" y="260.500" fontSize="5">שעות מכנה חישוב אחוז התעסוקה &lt;</text>
    </g>
    <path d="M3 263.500h92v10H3z" fill="#ffff00" />
    <text x="58" y="272.500" fill="#e02010" fontWeight="700" textDecoration="underline">אין התאמה בין שעות העבודה לשעות שהוזנו</text>
  </svg>
)

const buttonLook = 'rounded border border-[#b9b6b3] bg-linear-to-b from-[#fdfdfd] to-[#ecebea] text-center'
const tabLook = 'h-[27px] rounded-t border border-b-0 border-[#c9c7c5] bg-linear-to-b from-[#f0efee] to-[#e6e5e4]'

const Radio = ({ name, label, checked = false }: { name: string; label: string; checked?: boolean }) => (
  <label className="flex items-center gap-[9px]">
    <input
      type="radio"
      name={name}
      defaultChecked={checked}
      className="size-3.5 appearance-none rounded-full border border-[#8d8a87] bg-white checked:border-[#9c4a2b] checked:bg-[radial-gradient(circle,#5a2513_28%,#f08055_34%)]"
    />
    {label}
  </label>
)

const CopiesIcon = () => (
  <svg viewBox="0 0 42 38" className="h-[38px] w-[42px] font-['Open_Sans',sans-serif]" fontSize="17" fill="#f7f6f6" stroke="#333" strokeWidth="1.3">
    <path d="M21 1h14l5 5v19H21z" />
    <path d="M34 1v6h6z" fill="#333" />
    <text x="30" y="22" fill="#333" stroke="none">3</text>
    <path d="M11 7h13l5 5v19H11z" />
    <path d="M23 7v6h6z" fill="#333" />
    <text x="19" y="29" fill="#333" stroke="none">2</text>
    <path d="M1 13h12l5 5v19H1z" />
    <path d="M12 13v6h6z" fill="#333" />
    <text x="9" y="35" fill="#333" stroke="none">1</text>
  </svg>
)

const PrintDialog = () => (
  <section
    role="dialog"
    aria-labelledby="print-title"
    className="absolute top-[282px] left-[643px] z-20 flex h-[534px] w-[793px] flex-col rounded-t-md bg-[#f2f1f0] text-sm text-[#4c4c4c] shadow-[0_8px_26px_rgba(0,0,0,0.7)]"
  >
    <div className="flex h-7 shrink-0 items-center gap-1 rounded-t-md bg-linear-to-b from-[#56544c] to-[#403f3a] pl-2">
      <button type="button" aria-label="Close" className="flex size-[15px] items-center justify-center rounded-full border border-[#38352f] bg-linear-to-b from-[#f4855c] to-[#e4552a]">
        <svg viewBox="0 0 8 8" className="size-2" stroke="#4a2014" strokeWidth="1.2"><path d="M1 1l6 6M7 1L1 7" /></svg>
      </button>
      <button type="button" aria-label="Maximize" className="flex size-[15px] items-center justify-center rounded-full border border-[#38352f] bg-[#807e76]">
        <svg viewBox="0 0 8 8" className="size-2" stroke="#33312c" fill="none"><path d="M1 1h6v6H1z" /></svg>
      </button>
      <h2 id="print-title" className="ml-2 pt-px text-[15px] leading-5 font-bold text-[#dfdbd2]">Print</h2>
    </div>

    <div className="flex flex-1 pr-2 pl-2.5">
      <div className="flex w-[232px] flex-col pt-[46px]">
        <div className="flex h-5 items-center gap-3.5 pl-4">
          <i className="h-px flex-1 bg-[#d2d0ce]" />
          8.26 in (A4)
          <i className="mr-1.5 h-px flex-1 bg-[#d2d0ce]" />
        </div>
        <div className="flex">
          <div className="flex h-[306px] w-[15px] flex-col items-center gap-2">
            <i className="w-px flex-1 bg-[#d2d0ce]" />
            <span className="rotate-180 leading-4 [writing-mode:vertical-rl]">11.69 in</span>
            <i className="w-px flex-1 bg-[#d2d0ce]" />
          </div>
          <div className="w-[217px] overflow-hidden rounded border border-[#cfcdcb] bg-white">
            <PagePreview />
          </div>
        </div>
        <div className="mt-[47px] flex items-center pr-[30px] pl-[29px]">
          <input aria-label="Page" defaultValue="1" className="h-[26px] w-[30px] rounded border border-[#aaa7a4] bg-white pr-px text-right" />
          <span className="ml-[7px]">/ 6</span>
          <div className="ml-auto flex gap-2">
            <button type="button" aria-label="Previous page" className={`${buttonLook} flex h-[26px] w-3.5 items-center justify-center`}>
              <svg viewBox="0 0 4 7" className="h-[7px] w-1" fill="#bbb"><path d="M4 0v7L0 3.500z" /></svg>
            </button>
            <button type="button" aria-label="Next page" className={`${buttonLook} flex h-[26px] w-3.5 items-center justify-center`}>
              <svg viewBox="0 0 4 7" className="h-[7px] w-1" fill="#333"><path d="M0 0v7l4-3.500z" /></svg>
            </button>
          </div>
        </div>
      </div>

      <div className="ml-[7px] flex flex-1 flex-col pt-[7px]">
        <div role="tablist" className="flex items-end gap-px pl-0.5">
          <button type="button" role="tab" aria-selected="true" className="h-[29px] w-[61px] rounded-t border border-b-0 border-[#bfbcb9] bg-[#f8f7f7]">General</button>
          <button type="button" role="tab" className={`${tabLook} w-[118px]`}>LibreOffice Calc</button>
          <button type="button" role="tab" className={`${tabLook} w-[91px]`}>Page Layout</button>
          <button type="button" role="tab" className={`${tabLook} w-[66px]`}>Options</button>
        </div>
        <div role="tabpanel" className="h-[409px] rounded border border-[#c3c0be] bg-[#f8f7f7] pt-2 pr-2.5 pl-2.5">
          <h3 className="font-bold">Printer</h3>
          <ul role="listbox" aria-label="Printer" className="mt-[5px] ml-3 h-[100px] border border-[#bdbab7] bg-white p-px">
            <li role="option" aria-selected="true" className="h-[18px] border border-dotted border-[#7d3a20] bg-[#f07746] pl-px leading-4 text-white">Brother-MFC-8880DN</li>
          </ul>
          <div className="mt-[7px] flex justify-between pl-6">
            <button type="button" className="flex h-[26px] items-center gap-3">
              <svg viewBox="0 0 6 8" className="h-2 w-1.5" fill="#444"><path d="M0 0v8l6-4z" /></svg>
              Details
            </button>
            <button type="button" className={`${buttonLook} h-[29px] w-[107px]`}>Properties...</button>
          </div>
          <h3 className="mt-2.5 font-bold">Range and Copies</h3>
          <div className="flex">
            <div className="flex w-[304px] flex-col border-r border-[#dddbd9] pl-[11px]">
              <div className="flex flex-col gap-2.5">
                <Radio name="range" label="All sheets" />
                <Radio name="range" label="Selected sheets" checked />
                <Radio name="range" label="Selected cells" />
              </div>
              <div className="-ml-[11px] pt-[7px]">From which print</div>
              <div className="flex flex-col pt-1.5">
                <Radio name="pages" label="All pages" checked />
                <div className="mt-2 flex items-center gap-[17px]">
                  <Radio name="pages" label="Pages" />
                  <input aria-label="Page range" disabled defaultValue="1-6" className="h-[26px] w-[206px] rounded border border-[#c9c7c5] bg-[#ebeae9] px-1 text-[#8f8d8b]" />
                </div>
                <label className="mt-2 flex items-center gap-[9px]">
                  <input type="checkbox" className="size-3.5 appearance-none rounded-sm border border-[#8d8a87] bg-white" />
                  Print in reverse page order
                </label>
              </div>
            </div>
            <div className="flex-1 pl-1.5">
              <div className="flex h-6 items-center justify-between">
                <label htmlFor="copies">Number of copies</label>
                <div className="flex h-[25px] w-[70px] overflow-hidden rounded border border-[#aaa7a4] bg-white">
                  <input id="copies" defaultValue="1" className="w-0 flex-1 pl-0.5 outline-none" />
                  <div className="flex w-[17px] flex-col items-center justify-center gap-[5px] border-l border-[#c9c7c5] bg-[#f5f4f4]">
                    <button type="button" aria-label="More copies"><svg viewBox="0 0 6 3" className="h-[3px] w-1.5" fill="#555"><path d="M0 3h6L3 0z" /></svg></button>
                    <button type="button" aria-label="Fewer copies"><svg viewBox="0 0 6 3" className="h-[3px] w-1.5" fill="#555"><path d="M0 0h6L3 3z" /></svg></button>
                  </div>
                </div>
              </div>
              <div className="mt-2.5 flex items-center pl-[5px]">
                <label className="flex items-center gap-[9px] text-[#9a9896]">
                  <span className="relative flex">
                    <input type="checkbox" disabled defaultChecked className="size-3.5 appearance-none rounded-sm border border-[#bdbab7] bg-[#e4e2e0]" />
                    <svg viewBox="0 0 14 14" className="absolute inset-0 size-3.5" fill="none" stroke="#a9a7a5" strokeWidth="2"><path d="M3 7l3 4 6-9" /></svg>
                  </span>
                  Collate
                </label>
                <div className="ml-auto flex gap-[13px] pr-3">
                  <CopiesIcon />
                  <CopiesIcon />
                </div>
              </div>
            </div>
          </div>
        </div>
      </div>
    </div>

    <div className="flex items-center gap-2 px-3.5 pb-3.5">
      <button type="button" className={`${buttonLook} mr-auto h-[29px] w-[83px]`}>Help</button>
      <button type="button" className="h-[29px] w-[83px] rounded border border-[#cf7651] bg-linear-to-b from-[#f9a583] to-[#f48e66]">OK</button>
      <button type="button" className={`${buttonLook} h-[29px] w-[83px]`}>Cancel</button>
    </div>
  </section>
)

const App = () => (
  <div className="relative flex h-screen flex-col overflow-hidden bg-[#f2f1f0] font-['Open_Sans','Noto_Sans',sans-serif] text-[#3c3c3c]">
    <TopPanel />
    <StandardToolbar />
    <FormattingToolbar />
    <div className="flex min-h-0 flex-1">
      <main className="flex min-w-0 flex-1 flex-col">
        <FormulaBar />
        <div className="flex min-h-0 flex-1">
          <VerticalScroll />
          <Sheet />
        </div>
        <HorizontalScroll />
        <SheetTabs />
      </main>
      <Sidebar />
    </div>
    <StatusBar />
    <PrintDialog />
  </div>
)

export default App
